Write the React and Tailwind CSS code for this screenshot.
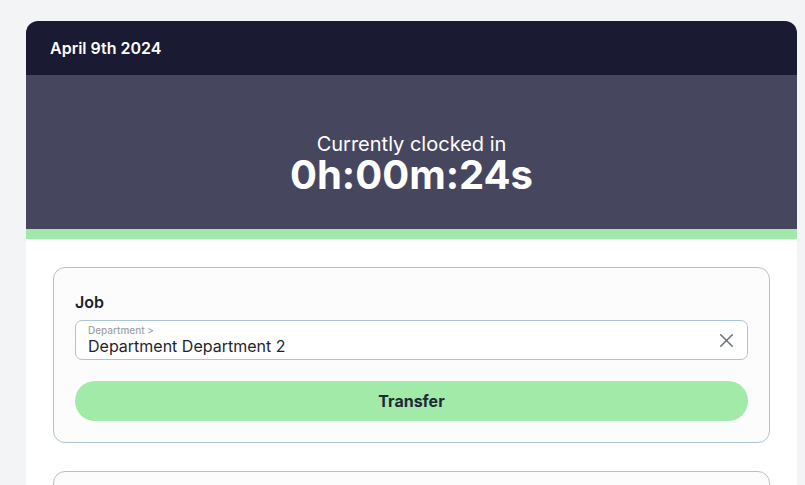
import { X } from 'lucide-react';

export default function App() {
  return (
    <div className="min-h-[485px] bg-[#f3f4f6] pt-[21px] pl-[26px] overflow-hidden" style={{ fontFamily: 'Inter, "Noto Sans", sans-serif' }}>
      <div className="w-[771px] rounded-t-[12px] overflow-hidden bg-white">
        <div className="h-[54px] bg-[#1a1a33] px-[24px] flex items-center">
          <span className="text-white text-[16px] font-semibold">April 9th 2024</span>
        </div>
        <div className="h-[154px] bg-[#46475f] flex flex-col items-center justify-center pt-[26px] text-white">
          <div className="text-[20px] leading-[20px]">Currently clocked in</div>
          <div className="text-[40px] leading-[42px] font-bold">0h:00m:24s</div>
        </div>
        <div className="h-[10px] bg-[#a0e9a8]" />
        <div className="px-[27px] pt-[28px] pb-[40px] flex flex-col gap-[28px]">
          <div className="rounded-[12px] border border-[#aec3d4] bg-[#fcfcfd] px-[21px] pt-[24px] pb-[21px]">
            <div className="text-[16px] font-semibold text-[#1f1f2e] leading-[20px] mb-[8px]">Job</div>
            <div className="h-[40px] rounded-[7px] border border-[#aec3d4] bg-white flex items-center pl-[12px] pr-[9px]">
              <div className="flex-1 flex flex-col">
                <span className="text-[10px] leading-[11px] text-[#a3a3a3] font-medium">Department &gt;</span>
                <span className="text-[16px] leading-[20px] text-[#1f1f2e]">Department Department 2</span>
              </div>
              <X className="w-[23px] h-[23px] text-[#6b7280]" strokeWidth={1.6} />
            </div>
            <button className="mt-[21px] w-full h-[40px] rounded-full bg-[#a1eaa8] text-[16px] font-bold text-[#1f2937]">
              Transfer
            </button>
          </div>
          <div className="h-[60px] rounded-[12px] border border-[#aec3d4] bg-[#fcfcfd]" />
        </div>
      </div>
    </div>
  );
}
